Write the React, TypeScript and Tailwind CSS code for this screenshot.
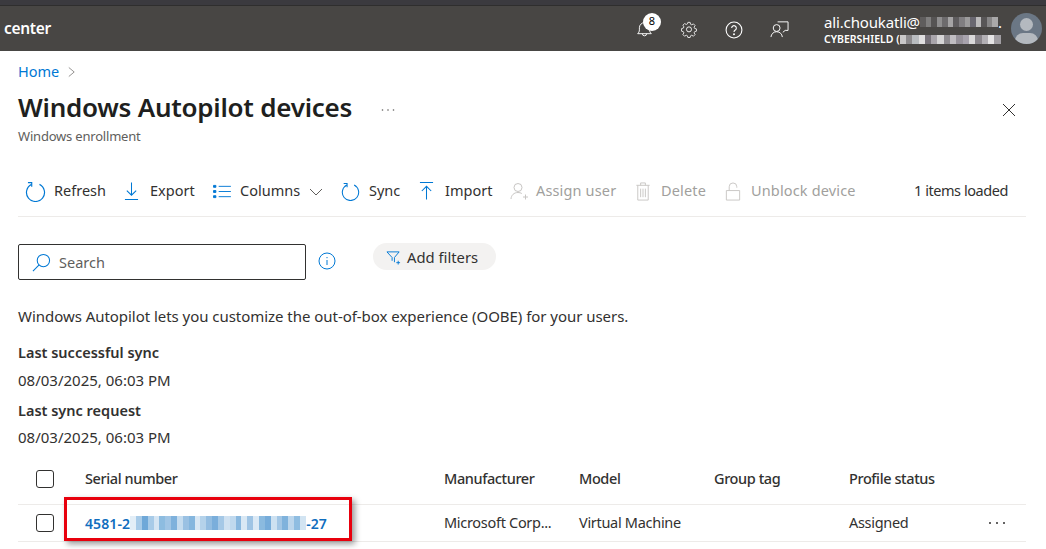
import type { ReactNode } from "react";

const blue = "#0078d4";

// mosaic colours for the blurred bits of the picture
const mailCells = ["#5f5d5d", "#7f7e7e", "#565454", "#8f8e8f", "#6d6b6d", "#a5a4a5", "#5e5c5e", "#807e81", "#9c9b9c", "#696770", "#bcbbbc", "#585657", "#878687", "#a9a8a9"];
const tenantCells = ["#c9c8c9", "#8c8a8d", "#b9bcc0", "#e0dfe0", "#77727a", "#a9a5ab", "#d6d5d6", "#8e8b90", "#c0bdc2", "#96919a", "#a8a3ad", "#dad9da", "#8a868c", "#b3b0b5", "#e5e4e5", "#a19ea3"];
const serialCells = ["#e3eef7", "#a8cbe8", "#6fa8d8", "#a8cbe8", "#d5e5f3", "#8dbce0", "#a0c5e5", "#7eb1dc", "#c5dcef", "#9ac1e3", "#85b6de", "#d8e7f4", "#b4d2ea", "#93bde1", "#7aaedb", "#a5c8e6", "#cfe1f1", "#c0d9ee", "#89b8df", "#d9e8f4", "#9fc4e4", "#dbe9f5", "#8bbadf", "#76acda", "#cde1f1", "#a2c6e5", "#7fb2dc", "#bcd6ec", "#8fbde1", "#d2e4f2"];

function Mosaic({ cells, w, h }: { cells: string[]; w: string; h: string }) {
  return (
    <span className={`inline-flex ${w} ${h}`}>
      {cells.map((c, i) => (
        <span key={i} className="flex-1" style={{ background: c }} />
      ))}
    </span>
  );
}

function Tool({ icon, label, className, off }: { icon: ReactNode; label: string; className: string; off?: boolean }) {
  return (
    <div className={`flex items-center ${className} ${off ? "text-[#a19f9d] tracking-[0.15px]" : "text-[#323130]"}`}>
      {icon}
      <span className="whitespace-nowrap">{label}</span>
    </div>
  );
}

function RefreshIcon({ className }: { className: string }) {
  return (
    <svg viewBox="0 0 20 20" className={className} fill="none" stroke={blue} strokeWidth="1.1">
      <path d="M6.2 3.2A8.6 8.6 0 1 0 13.8 3.2" />
      <path d="M2.8 1.6h3.6v3.8" />
    </svg>
  );
}

function Checkbox() {
  return <div className="w-[18px] h-[18px] rounded-[3px] border border-[#323130]" />;
}

export default function App() {
  return (
    <div className="w-[1046px] h-[549px] overflow-hidden bg-white relative font-['Noto_Sans',sans-serif] text-[14.5px] text-[#323130]">
      {/* top bar */}
      <div className="h-[5px] bg-[#3b3a3f]" />
      <div className="h-px bg-[#2f2e2e]" />
      <div className="h-[45px] bg-[#484644] flex items-center text-white">
        <span className="ml-[4px] text-[15.5px] font-semibold tracking-[-0.3px]">center</span>
        <div className="ml-auto flex items-center">
          <div className="relative w-[17px] h-[18px] mr-[27px]">
            <svg viewBox="0 0 20 20" className="w-[17px] h-[18px]" fill="none" stroke="white" strokeWidth="1.1">
              <path d="M2 15.500c1.200-1.200 2-2.400 2-4.500V8.500a6 6 0 0 1 12 0V11c0 2.100.8 3.300 2 4.500z" />
              <path d="M7.500 15.500a2.500 2.500 0 0 0 5 0" />
            </svg>
            <div className="absolute -top-[7px] left-[7px] w-[18px] h-[18px] rounded-full bg-white text-black text-[11px] flex items-center justify-center">8</div>
          </div>
          <svg viewBox="0 0 20 20" className="w-[18px] h-[18px] mr-[27px]" fill="none" stroke="white" strokeWidth="1">
            <path d="M8.600 1.800h2.800l.5 2.300 1.500.7 2.100-1.100 2 2-1.200 2.100.7 1.500 2.200.6v2.800l-2.200.6-.7 1.500 1.200 2.100-2 2-2.100-1.200-1.500.7-.5 2.100H8.600l-.5-2.100-1.500-.7-2.100 1.200-2-2 1.200-2.100-.7-1.500-2.200-.6V9.500l2.200-.6.7-1.500-1.200-2.100 2-2 2.100 1.100 1.500-.7z" transform="translate(1 1) scale(.9)" />
            <circle cx="10" cy="10.400" r="2.800" />
          </svg>
          <svg viewBox="0 0 20 20" className="w-[18px] h-[18px] mr-[27px] mt-[2px]" fill="none" stroke="white" strokeWidth="1.200">
            <circle cx="10" cy="10" r="8.800" />
            <path d="M7.400 7.800a2.600 2.600 0 1 1 4 2.200c-.9.600-1.400 1.100-1.400 2.200" />
            <circle cx="10" cy="14.600" r=".5" fill="white" />
          </svg>
          <svg viewBox="0 0 20 20" className="w-[19px] h-[19px] mr-[35px]" fill="none" stroke="white" strokeWidth="1">
            <path d="M8 3h11v9h-3l-2.500 2" />
            <circle cx="7" cy="9.500" r="3.600" />
            <path d="M1 19c.3-3.200 2.600-5.600 6-5.600s5.700 2.400 6 5.600" />
          </svg>
          <div className="w-[182px] flex flex-col mr-[5px] leading-none pt-[3px]">
            <div className="flex items-center h-[19px] text-[15px] tracking-[-0.15px] whitespace-nowrap">
              ali.choukatli@
              <Mosaic cells={mailCells} w="w-[78px]" h="h-[10px]" />
              <span>.</span>
            </div>
            <div className="flex items-center h-[16px] text-[10.5px] font-semibold whitespace-nowrap">
              CYBERSHIELD (
              <Mosaic cells={tenantCells} w="w-[101px]" h="h-[9px]" />
            </div>
          </div>
          <div className="w-[31px] h-[31px] rounded-full bg-[#6b7785] relative overflow-hidden mr-[4px]">
            <div className="absolute left-[9px] top-[5px] w-[13px] h-[13px] rounded-full bg-[#b4b9bf]" />
            <div className="absolute left-[4px] top-[20px] w-[23px] h-[16px] rounded-full bg-[#b4b9bf]" />
          </div>
        </div>
      </div>

      {/* breadcrumb + title */}
      <div className="px-[18px]">
        <div className="h-[20px] mt-[11px] flex items-center text-[#0078d4]">
          Home
          <svg viewBox="0 0 10 12" className="w-[9px] h-[12px] ml-[8px]" fill="none" stroke="#8a8886" strokeWidth="1">
            <path d="M2 1l6 5-6 5" />
          </svg>
        </div>
        <div className="flex items-center h-[36px] mt-[9px]">
          <h1 className="text-[26px] font-semibold text-[#201f1e] tracking-[-0.25px] whitespace-nowrap -mt-[4px]">Windows Autopilot devices</h1>
          <span className="ml-auto mr-[11px] mt-[2px]">
            <svg viewBox="0 0 16 16" className="w-[16px] h-[16px]" fill="none" stroke="#323130" strokeWidth="1">
              <path d="M2 2l12 12M14 2L2 14" />
            </svg>
          </span>
        </div>
        <div className="text-[13px] text-[#605e5c] h-[18px] leading-[18px] tracking-[-0.2px]">Windows enrollment</div>

        {/* toolbar */}
        <div className="flex items-center h-[46px] mt-[23px] w-[1008px] border-b border-[#edebe9] box-content pb-[2px]">
          <Tool className="ml-[7px] w-[99px]" label="Refresh" icon={<RefreshIcon className="w-[21px] h-[21px] mr-[8px]" />} />
          <Tool className="w-[88px]" label="Export" icon={
            <svg viewBox="0 0 16 20" className="w-[15px] h-[20px] mr-[11px]" fill="none" stroke={blue} strokeWidth="1.1">
              <path d="M8 1v13M3 9.500l5 5 5-5M1 19h14" />
            </svg>
          } />
          <Tool className="w-[129px]" label="Columns" icon={
            <span className="flex items-center">
              <svg viewBox="0 0 20 16" className="w-[19px] h-[15px] mr-[9px]" fill="none" stroke={blue} strokeWidth="1">
                <path d="M7 2.500h13M7 8h13M7 13.500h13" />
                <path d="M1.500 1.500h2.500v2H1.500zM1.500 7h2.500v2H1.500zM1.500 12.500h2.500v2H1.500z" fill={blue} />
              </svg>
            </span>
          } />
          <Tool className="w-[78px]" label="Sync" icon={<RefreshIcon className="w-[19px] h-[19px] mr-[9px]" />} />
          <Tool className="w-[91px]" label="Import" icon={
            <svg viewBox="0 0 16 20" className="w-[15px] h-[20px] mr-[11px]" fill="none" stroke={blue} strokeWidth="1.1">
              <path d="M1 1h14M8 19V5M3 10l5-5 5 5" />
            </svg>
          } />
          <Tool off className="w-[125px]" label="Assign user" icon={
            <svg viewBox="0 0 18 18" className="w-[18px] h-[18px] mr-[8px]" fill="none" stroke="#c8c6c4" strokeWidth="1">
              <circle cx="8" cy="5.500" r="4" />
              <path d="M1 17c.2-3.800 3-6.500 7-6.500 1.500 0 2.800.4 3.800 1M13 15h5M15.500 12.500v5" />
            </svg>
          } />
          <Tool off className="w-[90px]" label="Delete" icon={
            <svg viewBox="0 0 16 20" className="w-[16px] h-[19px] mr-[10px]" fill="none" stroke="#c8c6c4" strokeWidth="1">
              <path d="M1 3.500h14M5.500 3.500V1h5v2.500M2.500 3.500v15.500h11V3.500M5.500 7v9M8 7v9M10.500 7v9" />
            </svg>
          } />
          <Tool off className="w-[189px]" label="Unblock device" icon={
            <svg viewBox="0 0 16 20" className="w-[16px] h-[19px] mr-[10px]" fill="none" stroke="#c8c6c4" strokeWidth="1">
              <path d="M1 9h14v10H1zM4 9V5a4 4 0 0 1 8 0v1" />
            </svg>
          } />
          <span className="whitespace-nowrap text-[#323130] tracking-[-0.45px]">1 items loaded</span>
        </div>

        {/* search */}
        <div className="flex items-start mt-[26px]">
          <div className="w-[288px] h-[36px] mt-px border border-[#323130] rounded-[2px] flex items-center pl-[13px] pt-px text-[#605e5c]">
            <svg viewBox="0 0 20 20" className="w-[19px] h-[19px] mr-[8px]" fill="none" stroke={blue} strokeWidth="1.1">
              <circle cx="12" cy="8" r="6.500" />
              <path d="M7.500 12.500L1 19" />
            </svg>
            Search
          </div>
          <svg viewBox="0 0 18 18" className="w-[18px] h-[18px] ml-[12px] mt-[9px]" fill="none" stroke={blue} strokeWidth="1">
            <circle cx="9" cy="9" r="8" />
            <path d="M9 8v5M9 5v1.200" />
          </svg>
          <div className="ml-[37px] w-[123px] h-[27px] rounded-full bg-[#f3f2f1] flex items-center pl-[13px] pt-[2px] text-[14.8px]">
            <svg viewBox="0 0 16 16" className="w-[15px] h-[15px] mr-[6px]" fill="none" stroke={blue} strokeWidth="1">
              <path d="M1 2h13L9 8v5M6.500 11.500V8L1 2M11 13.500h4M13 11.500v4" />
            </svg>
            Add filters
          </div>
        </div>

        {/* info block */}
        <div className="mt-[26px] h-[20px] leading-[20px] text-[15px] tracking-[-0.04px] whitespace-nowrap">Windows Autopilot lets you customize the out-of-box experience (OOBE) for your users.</div>
        <div className="mt-[16px] h-[20px] leading-[20px] font-semibold">Last successful sync</div>
        <div className="mt-[8px] h-[20px] leading-[20px] text-[15px]">08/03/2025, 06:03 PM</div>
        <div className="mt-[10px] h-[20px] leading-[20px] font-semibold">Last sync request</div>
        <div className="mt-[7px] h-[20px] leading-[20px] text-[15px]">08/03/2025, 06:03 PM</div>

        {/* table */}
        <div className="mt-[10px] w-[1008px] tracking-[-0.3px]">
          <div className="grid grid-cols-[67px_359px_135px_135px_135px_1fr] items-center h-[48px] pb-[4px] border-b border-[#edebe9] font-medium text-[14.5px] tracking-[-0.4px]">
            <div className="pl-[18px]"><Checkbox /></div>
            <div>Serial number</div>
            <div>Manufacturer</div>
            <div>Model</div>
            <div>Group tag</div>
            <div>Profile status</div>
          </div>
          <div className="grid grid-cols-[67px_359px_135px_135px_135px_1fr] items-center h-[37px] border-b border-[#edebe9]">
            <div className="pl-[18px]"><Checkbox /></div>
            <div className="flex items-center text-[#106ebe] font-semibold text-[14px] tracking-[0.1px]">
              4581-2
              <Mosaic cells={serialCells} w="w-[176px]" h="h-[14px]" />
              -27
            </div>
            <div className="whitespace-nowrap">Microsoft Corp...</div>
            <div className="whitespace-nowrap">Virtual Machine</div>
            <div />
            <div className="flex items-center justify-between pr-[20px]">
              Assigned
              <svg viewBox="0 0 18 4" className="w-[18px] h-[4px]" fill="#323130">
                <circle cx="2" cy="2" r="1" />
                <circle cx="9" cy="2" r="1" />
                <circle cx="16" cy="2" r="1" />
              </svg>
            </div>
          </div>
        </div>
      </div>

      {/* title "..." menu */}
      <svg viewBox="0 0 14 4" className="absolute left-[381px] top-[108px] w-[14px] h-[4px]" fill="#605e5c">
        <circle cx="1.500" cy="2" r=".8" />
        <circle cx="7" cy="2" r=".8" />
        <circle cx="12.500" cy="2" r=".8" />
      </svg>
      {/* chevron of the Columns button */}
      <svg viewBox="0 0 14 8" className="absolute left-[309px] top-[188px] w-[14px] h-[8px]" fill="none" stroke="#605e5c" strokeWidth="1">
        <path d="M1 1l6 6 6-6" />
      </svg>
      {/* red annotation box drawn on the screenshot */}
      <div className="absolute left-[64px] top-[497px] w-[288px] h-[44px] border-[3px] border-[#e8000d] shadow-[3px_3px_6px_rgba(0,0,0,0.4)]" />
    </div>
  );
}
